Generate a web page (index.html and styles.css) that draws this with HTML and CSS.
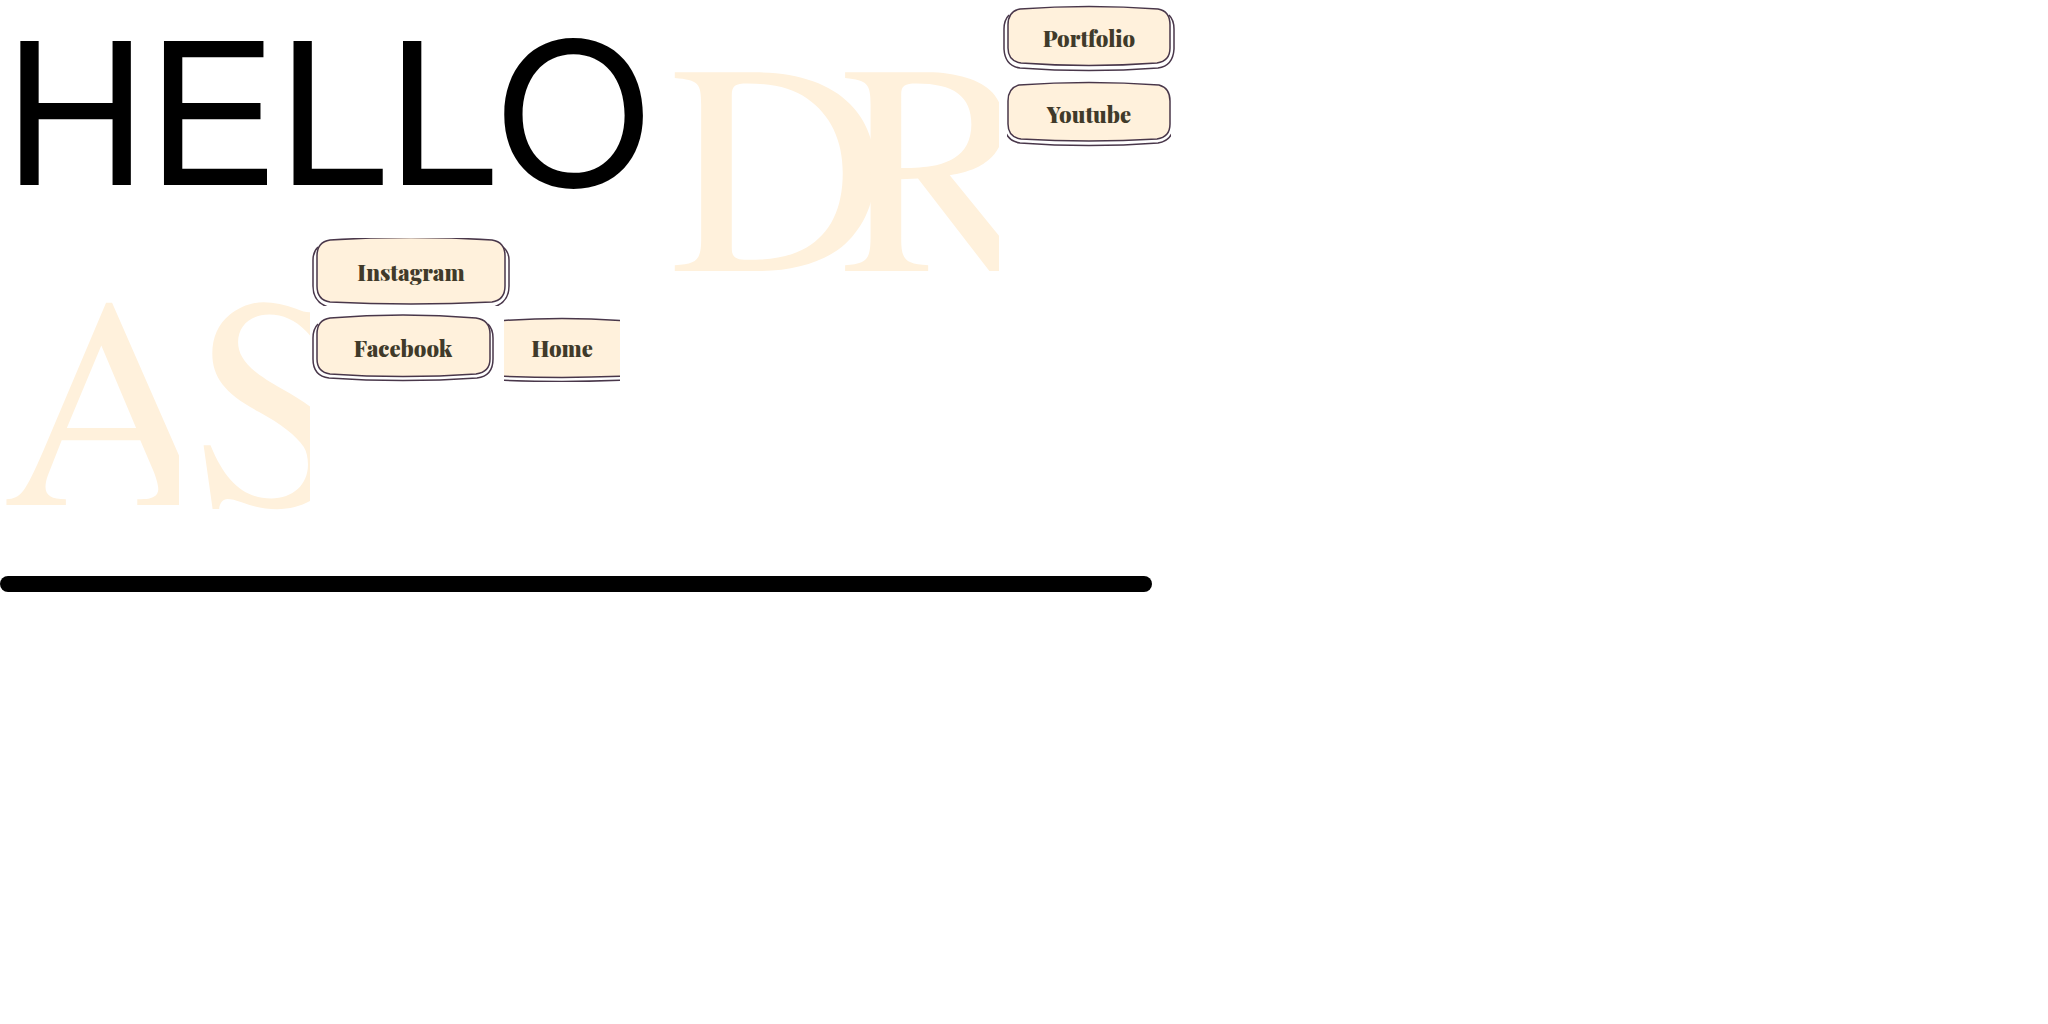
FILE: index.html
```html
<!DOCTYPE html>
<html lang="en">
<head>
<meta charset="utf-8">
<title>Hello</title>
<link rel="stylesheet" href="styles.css">
</head>
<body>
<main>
  <section class="row row-top">
    <h1 class="hello">HELLO</h1>
    <span class="letter letter-d">D</span>
    <span class="letter letter-r">R</span>
    <nav class="stack stack-top">
      <button class="tag tag-portfolio" type="button">
        <svg class="frame" viewBox="0 0 172 68" aria-hidden="true">
          <path class="back" d="M6 11Q1 16 1 25V45Q2 62 17 64Q86 69 155 64Q170 62 171 45V25Q171 16 166 11"/>
          <path class="face" d="M17 5Q86 0 155 5Q167 7 167 21V44Q167 57 154 59Q86 64 18 59Q5 57 5 44V21Q5 7 17 5Z"/>
        </svg>
        <span>Portfolio</span>
      </button>
      <button class="tag tag-youtube" type="button">
        <svg class="frame" viewBox="0 0 164 68" aria-hidden="true">
          <path class="back" d="M-3 46Q-1 61 13 63Q82 68 151 63Q165 61 167 46"/>
          <path class="face" d="M12 5Q82 0 152 5Q163 8 163 21V44Q163 57 150 59Q82 63 14 59Q1 57 1 44V21Q1 8 12 5Z"/>
        </svg>
        <span>Youtube</span>
      </button>
    </nav>
  </section>
  <section class="row row-bottom">
    <span class="letter letter-a">A</span>
    <span class="letter letter-s">S</span>
    <nav class="stack">
      <button class="tag tag-instagram" type="button">
        <svg class="frame" viewBox="0 0 198 68" aria-hidden="true">
          <path class="back" d="M6 9Q1 14 1 22V48Q1 64 16 69H182Q197 64 197 48V22Q197 14 191 9"/>
          <path class="face" d="M18 2Q99 -3 180 2Q193 4 193 18V48Q193 62 180 64Q99 68 18 64Q5 62 5 48V18Q5 4 18 2Z"/>
        </svg>
        <span>Instagram</span>
      </button>
      <div class="pair">
        <button class="tag tag-facebook" type="button">
          <svg class="frame" viewBox="0 0 182 68" aria-hidden="true">
            <path class="back" d="M6 10Q1 15 1 24V45Q1 62 17 64Q91 69 165 64Q181 62 181 45V24Q181 15 176 10"/>
            <path class="face" d="M18 4Q91 -2 164 4Q178 6 178 20V45Q178 58 164 60Q91 65 18 60Q5 58 5 45V20Q5 6 18 4Z"/>
          </svg>
          <span>Facebook</span>
        </button>
        <button class="tag tag-home" type="button">
          <svg class="frame" viewBox="0 0 116 68" aria-hidden="true">
            <path class="back" d="M-8 66Q58 69 124 66"/>
            <path class="face" d="M-8 7Q58 2 124 7V62Q58 65 -8 62Z"/>
          </svg>
          <span>Home</span>
        </button>
      </div>
    </nav>
  </section>
  <hr class="bar">
</main>
</body>
</html>
```
FILE: styles.css
```css
body {
  margin: 0;
  background: #fff;
}

.row {
  display: flex;
  align-items: flex-start;
}

.row-top {
  height: 234px;
}

.row-bottom {
  height: 342px;
}

.hello {
  margin: 0 20px 0 4px;
  font: 400 197px/200px "TeX Gyre Heros", "Liberation Sans", Arial, sans-serif;
  font-kerning: none;
}

.letter {
  flex: none;
  overflow: clip;
  color: #fff1dc;
  font: 300px/310px "TeX Gyre Termes", "FreeSerif", "Liberation Serif", serif;
}

.letter-d {
  width: 170px;
  overflow: visible;
}

.letter-r {
  width: 159px;
}

.letter-a {
  width: 177px;
  margin: 0 12px 0 2px;
}

.letter-s {
  width: 119px;
}

.stack {
  display: flex;
  flex-direction: column;
  align-items: flex-start;
  gap: 8px;
  margin: 4px 0 0 2px;
}

.stack-top {
  align-items: center;
  margin-left: 4px;
}

.pair {
  display: flex;
  gap: 10px;
}

.tag {
  position: relative;
  height: 68px;
  padding: 0;
  border: 0;
  overflow: hidden;
  background: none;
  color: #403a2a;
  font: 900 22px/68px "Playfair Display", "Liberation Serif", serif;
  cursor: pointer;
}

.tag span {
  position: relative;
}

.frame {
  position: absolute;
  top: 0;
  left: 0;
  width: 100%;
}

.back,
.face {
  stroke: #49374a;
  stroke-width: 1.5;
}

.back {
  fill: none;
}

.face {
  fill: #fff1dc;
}

.tag-portfolio {
  width: 172px;
}

.tag-youtube {
  width: 164px;
}

.tag-instagram {
  width: 198px;
}

.tag-facebook {
  width: 182px;
}

.tag-home {
  width: 116px;
}

.bar {
  width: 56.25%;
  height: 16px;
  margin: 0;
  border: 0;
  border-radius: 8px;
  background: #000;
}
```
